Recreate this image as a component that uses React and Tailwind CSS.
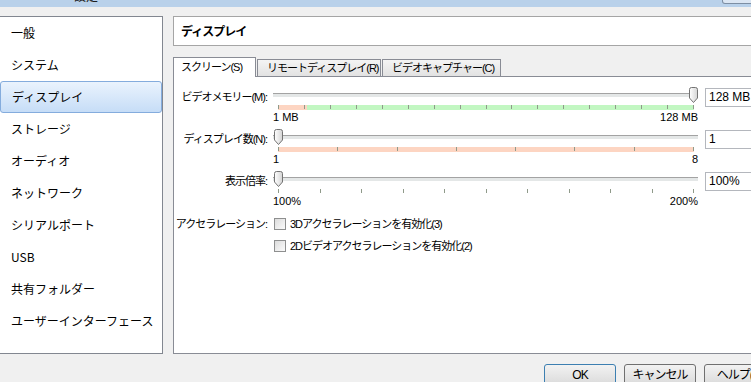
import React from 'react';

const FORM_FONT = "font-['Liberation_Sans','Noto_Sans_CJK_JP',sans-serif]";

const categories = [
  '一般',
  'システム',
  'ディスプレイ',
  'ストレージ',
  'オーディオ',
  'ネットワーク',
  'シリアルポート',
  'USB',
  '共有フォルダー',
  'ユーザーインターフェース',
];

// slider thumb, pointed at the bottom like the Win7 one
const Thumb = ({ left }) => (
  <svg
    width="9"
    height="16"
    viewBox="0 0 9 16"
    className="absolute top-0"
    style={{ left }}
  >
    <defs>
      <linearGradient id="thumbFill" x1="0" y1="0" x2="1" y2="0">
        <stop offset="0" stopColor="#ffffff" />
        <stop offset="1" stopColor="#d4d4d4" />
      </linearGradient>
    </defs>
    <path
      d="M0.5 2.5 A2 2 0 0 1 2.5 0.5 H6.5 A2 2 0 0 1 8.5 2.5 V11 L4.5 15.5 L0.5 11 Z"
      fill="url(#thumbFill)"
      stroke="#737373"
    />
  </svg>
);

const Ticks = ({ count, tickClass }) => (
  <div className="absolute inset-0 flex justify-between">
    {Array.from({ length: count }).map((_, i) => (
      <span key={i} className={tickClass} />
    ))}
  </div>
);

const SliderRow = ({ label, frac, band, ticks, minLabel, maxLabel, spin }) => (
  <div className="flex items-start h-[42px]">
    <div className="w-[93px] mt-[3px] leading-[15px] text-right tracking-[-1px] whitespace-nowrap">
      {label}
    </div>
    <div className="relative ml-[6px] w-[425px] h-[42px]">
      {/* track */}
      <div className="pt-[6px] h-[16px]">
        <div className="h-px bg-[#a3a3a3]" />
        <div className="h-[3px] bg-[#e4e7e7]" />
      </div>
      <Thumb left={5 + frac * 415 - 4} />
      {/* coloured band / ticks */}
      <div className="relative ml-[5px] w-[416px] h-[5px] mt-[2px] flex">
        {band === 'mem' && (
          <>
            <div className="w-[29px] bg-[#fdd5c2]" />
            <div className="flex-1 bg-[#c2f7c2]" />
          </>
        )}
        {band === 'count' && <div className="flex-1 bg-[#fdd5c2]" />}
        <Ticks count={ticks} tickClass="w-px h-[4px] bg-[#8f9a8a]" />
      </div>
      <div className="flex justify-between mt-px text-[11px] leading-[12px]">
        <span>{minLabel}</span>
        <span>{maxLabel}</span>
      </div>
    </div>
    <div className="ml-[7px] mt-px w-[60px] h-[19px] border border-[#b4b7bd] bg-white pl-[3px] text-[12px] leading-[17px]">
      {spin}
    </div>
  </div>
);

const CheckRow = ({ label, text }) => (
  <div className="flex items-center h-[22px]">
    <div className="w-[93px] text-right tracking-[-1px] whitespace-nowrap">{label}</div>
    <div className="ml-[7px] w-[12px] h-[12px] border border-[#8e8f8f] bg-gradient-to-br from-[#dcdcdc] to-[#fbfbfb]" />
    <div className="ml-[4px] tracking-[-1px] whitespace-nowrap">{text}</div>
  </div>
);

const Button = ({ children, primary }) => (
  <div
    className={`w-[72px] h-[23px] rounded-[3px] border text-center leading-[21px] bg-gradient-to-b from-[#f2f2f2] to-[#d9d9d9] ${
      primary ? 'border-[#3c7fb1]' : 'border-[#707070]'
    }`}
  >
    {children}
  </div>
);

export default function App() {
  return (
    <div className={`w-[751px] h-[382px] overflow-hidden bg-[#f0f0f0] text-black text-[11px] ${FORM_FONT}`}>
      <div className="w-[790px]">
        {/* window title bar (cut off) */}
        <div className="h-[7px] bg-[#b9d1ea] flex overflow-hidden">
          <span className="ml-[74px] -mt-[9px] text-[12px] leading-[12px] text-[#1e1e1e]">設定</span>
          <div className="ml-auto mr-[20px] w-[48px] h-[4px] border-x border-b border-[#7d8ea3] rounded-b-[3px] bg-[#dbe6f3]" />
        </div>

        <div className="flex mt-[9px]">
          {/* category list */}
          <div className="w-[163px] h-[338px] bg-white border-y border-r border-[#828790] font-['Noto_Sans_CJK_JP',sans-serif] text-[12px]">
            {categories.map((c) => (
              <div
                key={c}
                className={`h-[32px] flex items-center pl-[11px] whitespace-nowrap ${
                  c === 'ディスプレイ'
                    ? 'border border-[#84acdd] rounded-[3px] bg-gradient-to-b from-[#eaf3fd] to-[#c6ddf7] pl-[10px]'
                    : ''
                }`}
              >
                {c}
              </div>
            ))}
          </div>

          {/* right side */}
          <div className="ml-[10px] flex-1 flex flex-col">
            <div className="h-[30px] border border-[#a5a5a5] bg-white pl-[7px] flex items-center text-[12px] font-bold tracking-[-1px] font-['Noto_Sans_CJK_JP',sans-serif]">
              ディスプレイ
            </div>

            {/* tabs */}
            <div className="mt-[11px] -mb-px flex items-end relative z-10 tracking-[-1px]">
              <div className="w-[83px] h-[20px] bg-white border-x border-t border-[#898c95] pl-[7px] leading-[18px]">
                スクリーン(S)
              </div>
              <div className="ml-px w-[124px] h-[17px] mb-px bg-gradient-to-b from-[#f4f4f4] to-[#e2e2e2] border-x border-t border-[#898c95] pl-[9px] leading-[16px]">
                リモートディスプレイ(R)
              </div>
              <div className="ml-px w-[119px] h-[17px] mb-px bg-gradient-to-b from-[#f4f4f4] to-[#e2e2e2] border-x border-t border-[#898c95] pl-[9px] leading-[16px]">
                ビデオキャプチャー(C)
              </div>
            </div>

            {/* tab pane */}
            <div className="h-[278px] border border-[#898c95] bg-white pt-[10px]">
              <SliderRow
                label="ビデオメモリー(M):"
                frac={1}
                band="mem"
                ticks={17}
                minLabel="1 MB"
                maxLabel="128 MB"
                spin="128 MB"
              />
              <SliderRow
                label="ディスプレイ数(N):"
                frac={0}
                band="count"
                ticks={8}
                minLabel="1"
                maxLabel="8"
                spin="1"
              />
              <SliderRow
                label="表示倍率:"
                frac={0}
                band={null}
                ticks={11}
                minLabel="100%"
                maxLabel="200%"
                spin="100%"
              />
              <CheckRow label="アクセラレーション:" text="3Dアクセラレーションを有効化(3)" />
              <CheckRow label="" text="2Dビデオアクセラレーションを有効化(2)" />
            </div>

            {/* dialog buttons */}
            <div className="mt-[10px] flex gap-[8px] pl-[371px] text-[12px] tracking-[-1px]">
              <Button primary>OK</Button>
              <Button>キャンセル</Button>
              <Button>ヘルプ(H)</Button>
            </div>
          </div>
        </div>
      </div>
    </div>
  );
}
